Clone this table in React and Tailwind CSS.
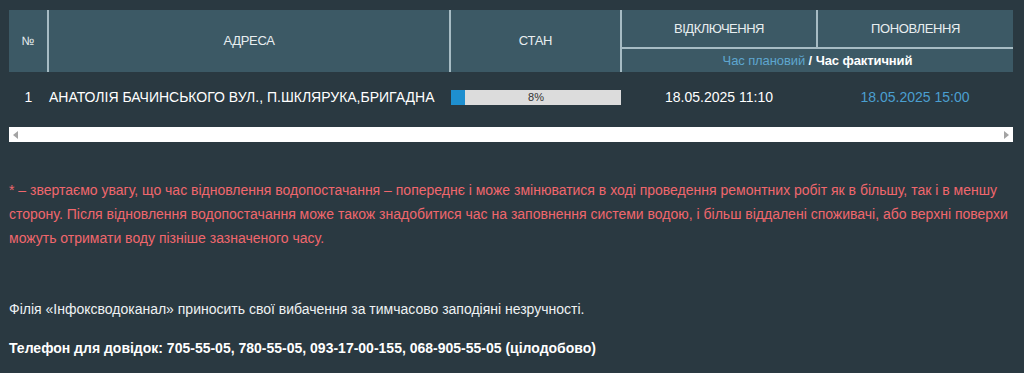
import React from 'react';

const rows = [
  {
    n: 1,
    address: 'АНАТОЛІЯ БАЧИНСЬКОГО ВУЛ., П.ШКЛЯРУКА,БРИГАДНА',
    progress: 8,
    off: '18.05.2025 11:10',
    on: '18.05.2025 15:00',
  },
];

function Progress({ value }) {
  return (
    <div className="relative h-[15px] w-[170px] bg-[#dcdcdc]">
      <div className="absolute left-0 top-0 h-full bg-[#1e8fcf]" style={{ width: `${value}%` }} />
      <span className="relative block text-center text-[11px] leading-[15px] text-[#333]">{value}%</span>
    </div>
  );
}

export default function App() {
  return (
    <div className="min-h-[373px] bg-[#2a3941] px-[9px] pt-[10px] font-['Liberation_Sans',Arial,sans-serif] text-[14px] text-white">
      <table className="w-[1004px] table-fixed border-collapse">
        <colgroup>
          <col className="w-[39px]" />
          <col className="w-[402px]" />
          <col className="w-[171px]" />
          <col className="w-[196px]" />
          <col className="w-[196px]" />
        </colgroup>
        <thead className="bg-[#3c5965] text-[13px] text-[#e8eef0]">
          <tr className="h-[38px]">
            <th rowSpan={2} className="border-r-2 border-[#a7bcc4] text-[12px] font-normal">№</th>
            <th rowSpan={2} className="border-r-2 border-[#a7bcc4] font-normal tracking-[-0.3px]">АДРЕСА</th>
            <th rowSpan={2} className="border-r-2 border-[#a7bcc4] font-normal tracking-[-0.3px]">СТАН</th>
            <th className="border-r-2 border-b-2 border-[#a7bcc4] font-normal tracking-[-0.5px]">ВІДКЛЮЧЕННЯ</th>
            <th className="border-b-2 border-[#a7bcc4] font-normal tracking-[-0.4px]">ПОНОВЛЕННЯ</th>
          </tr>
          <tr className="h-[24px]">
            <th colSpan={2} className="text-[13px] font-normal tracking-[-0.1px]">
              <span className="text-[#5ea6cf]">Час плановий</span>{' '}
              <span className="font-bold text-white">/ Час фактичний</span>
            </th>
          </tr>
        </thead>
        <tbody>
          {rows.map((r) => (
            <tr key={r.n} className="h-[50px]">
              <td className="text-center">{r.n}</td>
              <td className="whitespace-nowrap pl-[1px]">{r.address}</td>
              <td className="pl-[1px]">
                <Progress value={r.progress} />
              </td>
              <td className="text-center">{r.off}</td>
              <td className="text-center text-[#4a9fd0]">{r.on}</td>
            </tr>
          ))}
        </tbody>
      </table>

      {/* horizontal scroll track */}
      <div className="mt-[5px] flex h-[15px] w-[1004px] items-center justify-between bg-white px-[4px]">
        <svg width="5" height="8" viewBox="0 0 5 8">
          <path d="M5 0 L0 4 L5 8 Z" fill="#a3a3a3" />
        </svg>
        <svg width="5" height="8" viewBox="0 0 5 8">
          <path d="M0 0 L5 4 L0 8 Z" fill="#a3a3a3" />
        </svg>
      </div>

      <p className="mt-[36px] w-[1006px] leading-[24px] text-[#f0676d]">
        * – звертаємо увагу, що час відновлення водопостачання – попереднє і може змінюватися в ході проведення ремонтних робіт як в більшу, так і в меншу сторону. Після відновлення водопостачання може також знадобитися час на заповнення системи водою, і більш віддалені споживачі, або верхні поверхи можуть отримати воду пізніше зазначеного часу.
      </p>

      <p className="mt-[47px] leading-[24px] text-[#eef2f3]">
        Філія «Інфоксводоканал» приносить свої вибачення за тимчасово заподіяні незручності.
      </p>
      <p className="mt-[15px] font-bold leading-[24px]">
        Телефон для довідок: 705-55-05, 780-55-05, 093-17-00-155, 068-905-55-05 (цілодобово)
      </p>
    </div>
  );
}
